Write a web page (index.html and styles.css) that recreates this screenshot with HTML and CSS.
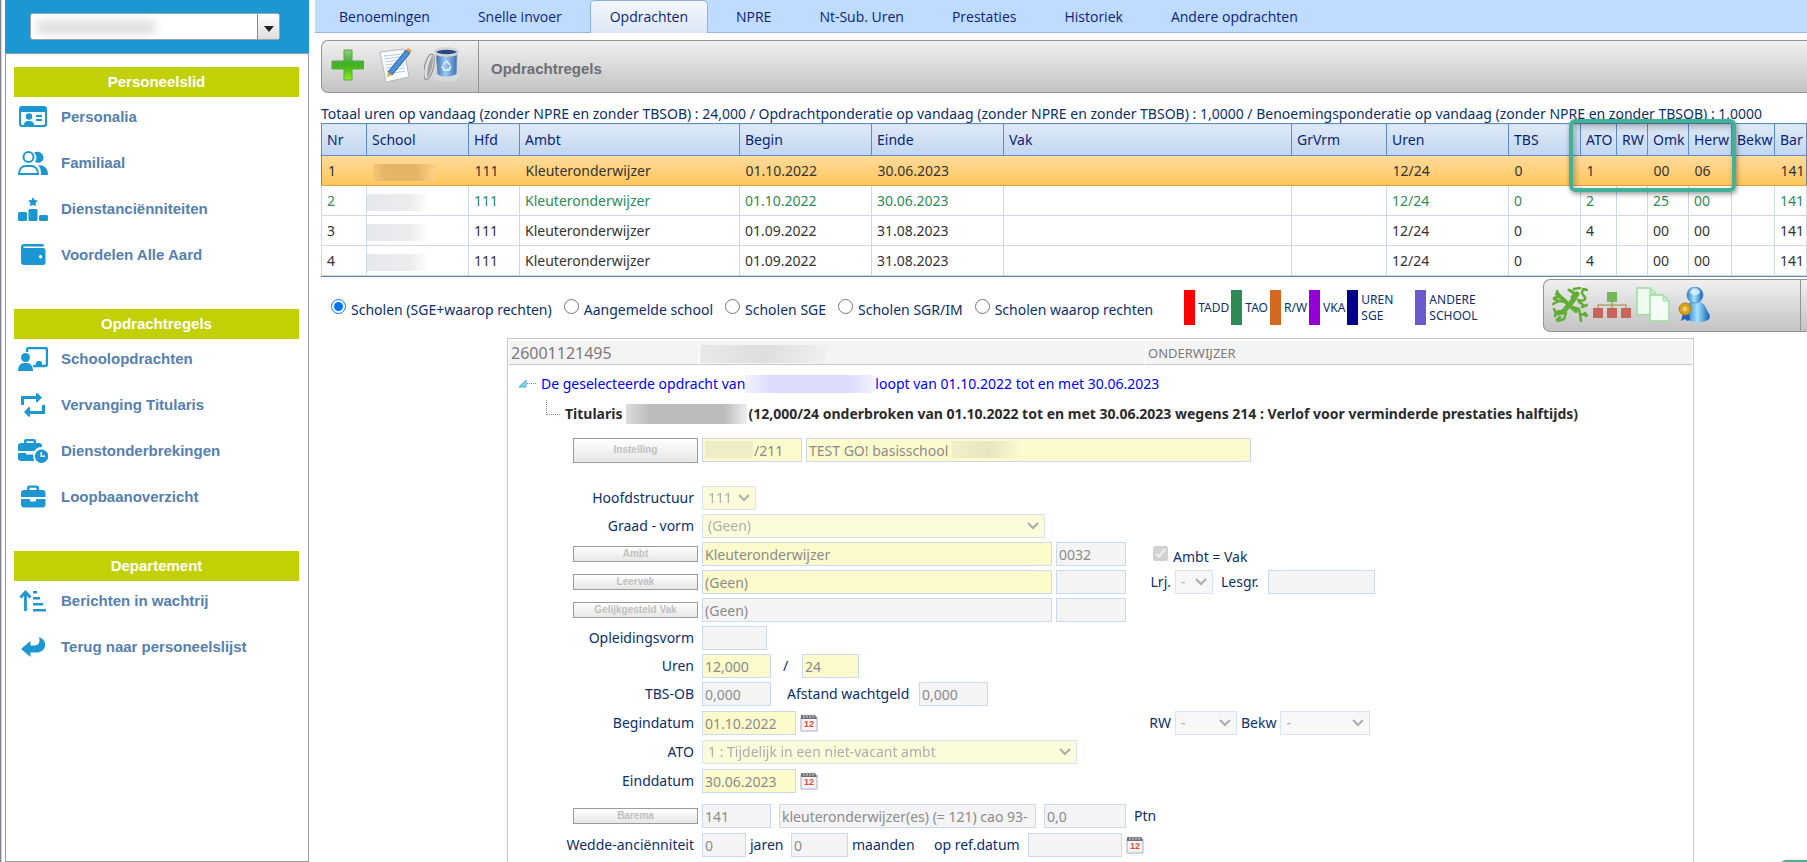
FILE: index.html
```html
<!DOCTYPE html>
<html lang="nl">
<head>
    <meta charset="utf-8">
    <meta name="viewport" content="width=device-width, initial-scale=1">
    <title>Opdrachten</title>
    <link rel="stylesheet" href="styles.css">
</head>
<body>
<div class="layout">

    <aside class="sidebar">
        <div class="search">
            <div class="combo">
                <input type="text" aria-label="Personeelslid">
                <span class="blur blur-search"></span>
                <button type="button" aria-label="Open lijst"><svg width="10" height="6" viewBox="0 0 10 6"><path d="M0 0h10L5 6z" fill="#222"/></svg></button>
            </div>
        </div>
        <nav class="menu">
            <h2>Personeelslid</h2>
            <ul>
                <li><a href="#"><svg viewBox="0 0 30 24"><path fill-rule="evenodd" d="M4 1h22a3 3 0 0 1 3 3v15a3 3 0 0 1-3 3H4a3 3 0 0 1-3-3V4a3 3 0 0 1 3-3zM3 7v12l1 1h2c0-3 2-4 5-4s5 1 5 4h10l1-1V7z"/><circle cx="11" cy="11.500" r="3.200"/><path d="M18 10h6v2h-6zM18 14h6v2h-6z"/></svg>Personalia</a></li>
                <li><a href="#"><svg viewBox="0 0 30 24"><circle cx="10.500" cy="6" r="5" fill="none" stroke="#1c97d2" stroke-width="2"/><path d="M1 23c0-5 3-8 7-8h5c4 0 7 3 7 8z" fill="none" stroke="#1c97d2" stroke-width="2"/><path d="M16 1.500c5-2 9.500 1 9.500 5 0 4.500-5 6.500-8.500 4.500 2-3 2-6.500-1-9.500zM20 14c6 0 10 3 10 10h-7c0-5-.5-7-3-10z"/></svg>Familiaal</a></li>
                <li><a href="#"><svg viewBox="0 0 30 24"><rect x="0" y="15" width="9" height="9" rx="1.500"/><rect x="10.500" y="12" width="9" height="12" rx="1.500"/><rect x="21" y="18" width="9" height="6" rx="1.500"/><path d="M15 0l1.500 3 3.500.5-2.500 2.500.6 3.300L15 7.700l-3.100 1.600.6-3.300L10 3.500l3.500-.5z"/></svg>Dienstanciënniteiten</a></li>
                <li><a href="#"><svg viewBox="0 0 30 24"><path fill-rule="evenodd" d="M6 1h18a1.500 1.500 0 0 1 1.500 2.500H5.500V5H25a2.500 2.500 0 0 1 2.500 2.500v12A2.500 2.500 0 0 1 25 22H6a3 3 0 0 1-3-3V4a3 3 0 0 1 3-3zm16.500 11a1.700 1.700 0 1 0 .1 0z"/></svg>Voordelen Alle Aard</a></li>
            </ul>
            <h2>Opdrachtregels</h2>
            <ul>
                <li><a href="#"><svg viewBox="0 0 30 24"><circle cx="7.500" cy="10.500" r="4.500"/><path d="M0 24c0-5 2.500-8 6-8h3c3.500 0 6 3 6 8z"/><path d="M9 5V3a2 2 0 0 1 2-2h16a2 2 0 0 1 2 2v14a2 2 0 0 1-2 2H15" fill="none" stroke="#1c97d2" stroke-width="2.400"/><path d="M18 18v-2a2 2 0 0 1 2-2h2a2 2 0 0 1 2 2v2z"/></svg>Schoolopdrachten</a></li>
                <li><a href="#"><svg viewBox="0 0 30 24"><path d="M4.500 12V4.500H20M25.500 12v7.500H10" fill="none" stroke="#1c97d2" stroke-width="3"/><path d="M18 0l1-.2 5 4.700-5 5-1-.5zM12 14l-1-.2-5 5.200 5 5 1-.5z"/></svg>Vervanging Titularis</a></li>
                <li><a href="#"><svg viewBox="0 0 30 24"><path fill-rule="evenodd" d="M6 4V2a2 2 0 0 1 2-2h8a2 2 0 0 1 2 2v2h3a3 3 0 0 1 3 3v1c-4 0-6 1.500-7.500 4H0V7a3 3 0 0 1 3-3zm2.500 0h7V2.200h-7zM0 14h8v1.500h7.500c-.5 2.500 0 4.500 1 6.500H3a3 3 0 0 1-3-3z"/><path fill-rule="evenodd" d="M23.500 10.500a6.700 6.700 0 1 0 .1 0zM22.500 13v5h4.500v-1.500h-3V13z"/></svg>Dienstonderbrekingen</a></li>
                <li><a href="#"><svg viewBox="0 0 30 24"><path fill-rule="evenodd" d="M9 5V3a2.500 2.500 0 0 1 2.500-2.500h7A2.500 2.500 0 0 1 21 3v2h3.500a3 3 0 0 1 3 3v4H3V8a3 3 0 0 1 3-3zm2.500 0h7V2.800h-7zM3 14h9v1.500q0 1 1 1h4q1 0 1-1V14h9.500v5.500a3 3 0 0 1-3 3H6a3 3 0 0 1-3-3z"/></svg>Loopbaanoverzicht</a></li>
            </ul>
            <h2>Departement</h2>
            <ul>
                <li><a href="#"><svg viewBox="0 0 30 24"><path d="M7.500 22V3M2.500 8.500l5-5.500 5 5.500" fill="none" stroke="#1c97d2" stroke-width="2.800"/><path d="M15 2h4v2.500h-4zM15 8h7v2.500h-7zM15 14h10v2.500H15zM15 20h13v2.500H15z"/></svg>Berichten in wachtrij</a></li>
                <li><a href="#"><svg viewBox="0 0 30 24"><path d="M3 14l9.500-8v4.500h4c4 0 6-3 4.500-8.500 5 2 6.500 5 6 9-.6 4-4 6.500-9 6.500h-5.500V22z"/></svg>Terug naar personeelslijst</a></li>
            </ul>
        </nav>
    </aside>

    <main class="content">
        <nav class="tabs">
            <a href="#">Benoemingen</a>
            <a href="#">Snelle invoer</a>
            <a href="#" class="active">Opdrachten</a>
            <a href="#">NPRE</a>
            <a href="#">Nt-Sub. Uren</a>
            <a href="#">Prestaties</a>
            <a href="#">Historiek</a>
            <a href="#">Andere opdrachten</a>
        </nav>

        <div class="toolbar">
            <div class="tools">
                <button type="button" aria-label="Toevoegen"><svg width="36" height="36" viewBox="0 0 36 36"><defs><linearGradient id="plus" x1="0" y1="0" x2="0" y2="1"><stop offset="0" stop-color="#8ed07c"/><stop offset=".45" stop-color="#3fae2a"/><stop offset=".6" stop-color="#4cbb16"/><stop offset="1" stop-color="#86f01c"/></linearGradient></defs><path d="M14 3h8v11h11.500v8H22v11h-8V22H2v-8h12z" fill="url(#plus)" stroke="#5aa54a"/></svg></button>
                <button type="button" aria-label="Wijzigen"><svg width="36" height="36" viewBox="0 0 36 36"><path d="M3 5l24-3 5 28-23 5z" fill="#fafbfd" stroke="#b4b8c0"/><path d="M7 9l18-2M7.500 12l18-2.500M8 15l18-2.500M8.500 18l18-2.500M9 21l18-3M9.500 24l18-3M10 27l18-3" stroke="#b9c9e2"/><path d="M29 3l4 3-18 22-4-3z" fill="#4b8fd8" stroke="#2860a8"/><path d="M11 25l4 3-5.500 2.500z" fill="#e5b84a"/><path d="M29 3l2-2 4 3-2 2z" fill="#e09a40"/></svg></button>
                <button type="button" aria-label="Verwijderen"><svg width="36" height="36" viewBox="0 0 36 36"><defs><linearGradient id="bin"><stop offset="0" stop-color="#3b70b2"/><stop offset=".45" stop-color="#9cc8f4"/><stop offset="1" stop-color="#3b70b2"/></linearGradient></defs><path d="M12 5h21l-1 23c-4 3-14 3-18 0z" fill="url(#bin)" stroke="#6d8fb8"/><ellipse cx="22.500" cy="5" rx="11.500" ry="3.500" fill="#264a80" stroke="#d4d4d8" stroke-width="2.500"/><path d="M11 29c5 4 18 4 23 0" fill="none" stroke="#d7d9dc" stroke-width="5" stroke-linecap="round"/><path d="M19 18l3.500-4 3.500 4M27 19l-2 4h-5l-2-4" fill="none" stroke="#d8efff" stroke-width="1.800"/><ellipse cx="6" cy="20" rx="3" ry="12" transform="rotate(13 6 20)" fill="#a4a4a8" stroke="#dedede" stroke-width="2"/><ellipse cx="5" cy="20" rx="4.500" ry="13" transform="rotate(13 6 20)" fill="none" stroke="#88888c"/></svg></button>
            </div>
            <span class="toolbar-title">Opdrachtregels</span>
        </div>

        <p class="totals">Totaal uren op vandaag (zonder NPRE en zonder TBSOB) : 24,000 / Opdrachtponderatie op vandaag (zonder NPRE en zonder TBSOB) : 1,0000 / Benoemingsponderatie op vandaag (zonder NPRE en zonder TBSOB) : 1,0000</p>

        <div class="grid-wrap">
            <table class="grid">
                <colgroup>
                    <col class="c-nr"><col class="c-school"><col class="c-hfd"><col class="c-ambt"><col class="c-date"><col class="c-date"><col><col class="c-grvrm"><col class="c-uren"><col class="c-tbs"><col class="c-ato"><col class="c-rw"><col class="c-omk"><col class="c-herw"><col class="c-herw"><col class="c-bar">
                </colgroup>
                <thead>
                    <tr><th>Nr</th><th>School</th><th>Hfd</th><th>Ambt</th><th>Begin</th><th>Einde</th><th>Vak</th><th>GrVrm</th><th>Uren</th><th>TBS</th><th>ATO</th><th>RW</th><th>Omk</th><th>Herw</th><th>Bekw</th><th>Bar</th></tr>
                </thead>
                <tbody>
                    <tr class="selected"><td>1</td><td class="masked"><span class="blur blur-orange"></span></td><td>111</td><td>Kleuteronderwijzer</td><td>01.10.2022</td><td>30.06.2023</td><td></td><td></td><td>12/24</td><td>0</td><td>1</td><td></td><td>00</td><td>06</td><td></td><td>141</td></tr>
                    <tr class="tao"><td>2</td><td class="masked"><span class="blur blur-cell"></span></td><td>111</td><td>Kleuteronderwijzer</td><td>01.10.2022</td><td>30.06.2023</td><td></td><td></td><td>12/24</td><td>0</td><td>2</td><td></td><td>25</td><td>00</td><td></td><td>141</td></tr>
                    <tr><td>3</td><td class="masked"><span class="blur blur-cell"></span></td><td>111</td><td>Kleuteronderwijzer</td><td>01.09.2022</td><td>31.08.2023</td><td></td><td></td><td>12/24</td><td>0</td><td>4</td><td></td><td>00</td><td>00</td><td></td><td>141</td></tr>
                    <tr><td>4</td><td class="masked"><span class="blur blur-cell"></span></td><td>111</td><td>Kleuteronderwijzer</td><td>01.09.2022</td><td>31.08.2023</td><td></td><td></td><td>12/24</td><td>0</td><td>4</td><td></td><td>00</td><td>00</td><td></td><td>141</td></tr>
                </tbody>
            </table>
            <div class="marker"></div>
        </div>

        <div class="filters">
            <div class="scope">
                <label><input type="radio" name="scope" checked>Scholen (SGE+waarop rechten)</label>
                <label><input type="radio" name="scope">Aangemelde school</label>
                <label><input type="radio" name="scope">Scholen SGE</label>
                <label><input type="radio" name="scope">Scholen SGR/IM</label>
                <label><input type="radio" name="scope">Scholen waarop rechten</label>
            </div>
            <ul class="legend">
                <li><i class="tadd"></i>TADD</li>
                <li><i class="green"></i>TAO</li>
                <li><i class="rw"></i>R/W</li>
                <li><i class="vka"></i>VKA</li>
                <li class="wide"><i class="sge"></i>UREN<br>SGE</li>
                <li><i class="andere"></i>ANDERE<br>SCHOOL</li>
            </ul>
            <div class="toolbar toolbar-right">
                <div class="tools">
                    <button type="button" aria-label="Vlaanderen"><svg width="36" height="36" viewBox="0 0 36 36"><g fill="none" stroke="#62ad35" stroke-linecap="round" stroke-linejoin="round"><path d="M5 7l7 6 7 7 5 4" stroke-width="4"/><path d="M25 7l-6 9-8 9-6 1" stroke-width="5"/><path d="M2 11l4-1M5 4l2 4M1 17l6-3 6 1M7 14l-5-2M2 22l2 4-1 3M6 34l6-2 2-6M8 30l-3 3M20 20l7 2 1 5 7 1M28 27l1 7M33 26l1 3" stroke-width="2.500"/><path d="M22 2l6-1M20 5l4 4M26 13c6 2 9-1 6-4s-3-5 1-7M31 2l4 1M27 15l6 4M30 20l5-2" stroke-width="2.500"/><path d="M17 3l7 4-4 3" stroke-width="3"/></g></svg></button>
                    <button type="button" aria-label="Structuur"><svg width="40" height="36" viewBox="0 0 40 36"><path d="M20 14v8M6 22v-4h28v4" fill="none" stroke="#b3a26c" stroke-width="1.500"/><rect x="15" y="5" width="10" height="10" fill="#72b85a"/><path d="M1 21h10v10H1zM15 21h10v10H15zM29 21h10v10H29z" fill="#c8645c"/></svg></button>
                    <button type="button" aria-label="Kopiëren"><svg width="36" height="36" viewBox="0 0 36 36"><path d="M1 1h13l6 6v20l-19 1z" fill="#effaef" stroke="#9bdc9e" stroke-width="1.500"/><path d="M14 8h13l6 6v20H14z" fill="#f5fcf5" stroke="#9bdc9e" stroke-width="1.500"/><path d="M14 1v6h6zM27 8v6h6z" fill="#c8f0c8" stroke="#9bdc9e"/></svg></button>
                    <button type="button" aria-label="Persoon"><svg width="36" height="36" viewBox="0 0 36 36"><defs><linearGradient id="pers"><stop offset="0" stop-color="#2e80c8"/><stop offset=".45" stop-color="#a5e4ff"/><stop offset="1" stop-color="#145cb0"/></linearGradient></defs><path d="M11 32V22c0-6 3-8 9-8s9 4 11 9c2 4 4 6 2 9-3 4-18 4-22 0z" fill="url(#pers)"/><circle cx="19" cy="8" r="8" fill="url(#pers)" stroke="#4a86bb" stroke-width=".8"/><ellipse cx="19" cy="5" rx="5" ry="3" fill="#e3f2ff" opacity=".8"/><path d="M7 26l-2 8 4-2 2 2 3-1-1-8z" fill="#2163b5"/><circle cx="9" cy="22" r="6" fill="#d6a21e" stroke="#b57f16"/><circle cx="9" cy="22" r="2.500" fill="#f0cb5e"/></svg></button>
                </div>
            </div>
        </div>

        <section class="panel">
            <header class="panel-head">
                <span class="ph-id">26001121495</span>
                <span class="ph-name"><span class="blur blur-name"></span></span>
                <span class="ph-role">ONDERWIJZER</span>
            </header>

            <div class="tree">
                <div class="tree-root"><svg width="18" height="10" viewBox="0 0 18 10"><path d="M1 8L8 1v7z" fill="#6fd6f5" stroke="#4db4dc"/><path d="M9 4.500h9" stroke="#888" stroke-dasharray="1 1"/></svg>De geselecteerde opdracht van<span class="blur blur-blue"></span>loopt van 01.10.2022 tot en met 30.06.2023</div>
                <div class="tree-node"><i></i>Titularis<span class="blur blur-bold"></span>(12,000/24 onderbroken van 01.10.2022 tot en met 30.06.2023 wegens 214 : Verlof voor verminderde prestaties halftijds)</div>
            </div>

            <form class="form">
                <div class="row">
                    <div class="lbl"><button type="button" class="btn btn-tall" disabled>Instelling</button></div>
                    <div class="fields">
                        <span class="field-masked"><input class="req w-code" type="text" value="/211" aria-label="Instelling code" disabled><span class="blur blur-code"></span></span>
                        <span class="field-masked"><input class="req w-school" type="text" value="TEST GO! basisschool" aria-label="Instelling" disabled><span class="blur blur-school"></span></span>
                    </div>
                </div>
                <div class="row row-structure">
                    <label class="lbl" for="hoofd">Hoofdstructuur</label>
                    <div class="fields"><select id="hoofd" class="req w-hoofd" disabled><option>111</option></select></div>
                </div>
                <div class="row">
                    <label class="lbl" for="graad">Graad - vorm</label>
                    <div class="fields"><select id="graad" class="req w-graad" disabled><option>(Geen)</option></select></div>
                </div>
                <div class="row">
                    <div class="lbl"><button type="button" class="btn" disabled>Ambt</button></div>
                    <div class="fields">
                        <input class="req w-ambt" type="text" value="Kleuteronderwijzer" aria-label="Ambt" disabled>
                        <input class="w-nr" type="text" value="0032" aria-label="Ambt code" disabled>
                    </div>
                    <label class="check"><input type="checkbox" checked disabled>Ambt = Vak</label>
                </div>
                <div class="row">
                    <div class="lbl"><button type="button" class="btn" disabled>Leervak</button></div>
                    <div class="fields">
                        <input class="req w-ambt" type="text" value="(Geen)" aria-label="Leervak" disabled>
                        <input class="w-nr" type="text" aria-label="Leervak code" disabled>
                    </div>
                    <div class="extra">
                        <label class="first" for="lrj">Lrj.</label>
                        <select id="lrj" class="w-lrj" disabled><option>-</option></select>
                        <label class="lesgr" for="lesgr">Lesgr.</label>
                        <input id="lesgr" class="w-lesgr" type="text" disabled>
                    </div>
                </div>
                <div class="row">
                    <div class="lbl"><button type="button" class="btn" disabled>Gelijkgesteld Vak</button></div>
                    <div class="fields">
                        <input class="w-ambt" type="text" value="(Geen)" aria-label="Gelijkgesteld vak" disabled>
                        <input class="w-nr" type="text" aria-label="Gelijkgesteld vak code" disabled>
                    </div>
                </div>
                <div class="row">
                    <label class="lbl" for="opl">Opleidingsvorm</label>
                    <div class="fields"><input id="opl" class="w-opl" type="text" disabled></div>
                </div>
                <div class="row">
                    <label class="lbl" for="uren">Uren</label>
                    <div class="fields">
                        <input id="uren" class="req w-num" type="text" value="12,000" disabled>
                        <span class="slash">/</span>
                        <input class="req w-small" type="text" value="24" aria-label="Noemer" disabled>
                    </div>
                </div>
                <div class="row">
                    <label class="lbl" for="tbs">TBS-OB</label>
                    <div class="fields">
                        <input id="tbs" class="w-num" type="text" value="0,000" disabled>
                        <label class="afstand" for="afstand">Afstand wachtgeld</label>
                        <input id="afstand" class="w-num" type="text" value="0,000" disabled>
                    </div>
                </div>
                <div class="row row-date">
                    <label class="lbl" for="begin">Begindatum</label>
                    <div class="fields">
                        <input id="begin" class="req w-date" type="text" value="01.10.2022" disabled>
                        <button type="button" class="cal" aria-label="Kalender"><svg width="18" height="18" viewBox="0 0 18 18"><path d="M1 3h16v14H1z" fill="#f5f5ff" stroke="#a8a8cc"/><path d="M1 1h14l2 4H1z" fill="#707078"/><path d="M4 0v4M7 0v4M10 0v4M13 0v4" stroke="#d8d8d8"/><text x="9" y="13" text-anchor="middle">12</text></svg></button>
                    </div>
                    <div class="extra">
                        <label class="first" for="rw">RW</label>
                        <select id="rw" class="w-rw" disabled><option>-</option></select>
                        <label for="bekw">Bekw</label>
                        <select id="bekw" class="w-bekw" disabled><option>-</option></select>
                    </div>
                </div>
                <div class="row">
                    <label class="lbl" for="ato">ATO</label>
                    <div class="fields"><select id="ato" class="req w-ato" disabled><option>1 : Tijdelijk in een niet-vacant ambt</option></select></div>
                </div>
                <div class="row row-date">
                    <label class="lbl" for="eind">Einddatum</label>
                    <div class="fields">
                        <input id="eind" class="req w-date" type="text" value="30.06.2023" disabled>
                        <button type="button" class="cal" aria-label="Kalender"><svg width="18" height="18" viewBox="0 0 18 18"><path d="M1 3h16v14H1z" fill="#f5f5ff" stroke="#a8a8cc"/><path d="M1 1h14l2 4H1z" fill="#707078"/><path d="M4 0v4M7 0v4M10 0v4M13 0v4" stroke="#d8d8d8"/><text x="9" y="13" text-anchor="middle">12</text></svg></button>
                    </div>
                </div>
                <div class="row row-barema">
                    <div class="lbl"><button type="button" class="btn" disabled>Barema</button></div>
                    <div class="fields fields-wide">
                        <input class="w-num" type="text" value="141" aria-label="Barema" disabled>
                        <input class="w-barema" type="text" value="kleuteronderwijzer(es) (= 121) cao 93-" aria-label="Barema omschrijving" disabled>
                        <input id="ptn" class="w-ptn" type="text" value="0,0" disabled>
                        <label for="ptn">Ptn</label>
                    </div>
                </div>
                <div class="row">
                    <label class="lbl" for="jaren">Wedde-anciënniteit</label>
                    <div class="fields">
                        <input id="jaren" class="w-jaren" type="text" value="0" disabled>
                        <label class="jaren" for="jaren">jaren</label>
                        <input id="maanden" class="w-small" type="text" value="0" disabled>
                        <label class="maanden" for="maanden">maanden</label>
                        <label class="ref" for="ref">op ref.datum</label>
                        <input id="ref" class="w-date" type="text" disabled>
                        <button type="button" class="cal" aria-label="Kalender"><svg width="18" height="18" viewBox="0 0 18 18"><path d="M1 3h16v14H1z" fill="#f5f5ff" stroke="#a8a8cc"/><path d="M1 1h14l2 4H1z" fill="#707078"/><path d="M4 0v4M7 0v4M10 0v4M13 0v4" stroke="#d8d8d8"/><text x="9" y="13" text-anchor="middle">12</text></svg></button>
                    </div>
                </div>
            </form>
        </section>
    </main>
    <div class="marker marker-corner"></div>
</div>
</body>
</html>
```

FILE: styles.css
```css
* {
    box-sizing: border-box;
}
body {
    margin: 0;
    background: #fff;
    color: #0b2f6b;
    font: 14px/20px "Noto Sans", "Open Sans", sans-serif;
}
ul, h2, p {
    margin: 0;
    padding: 0;
}
ul {
    list-style: none;
}
a {
    color: inherit;
    text-decoration: none;
}
button, input, select {
    font: inherit;
}
.layout {
    position: relative;
    display: flex;
    min-height: 100vh;
    overflow: hidden;
    border-left: 1px solid #83838f;
    box-shadow: inset 1px 0 #c6d3ea;
}

/* left menu */
.sidebar {
    display: flex;
    flex-direction: column;
    flex: none;
    width: 304px;
    margin-left: 4px;
    font-family: "Liberation Sans", Arial, sans-serif;
}
.search {
    padding: 13px 29px 13px 25px;
    background: #1c97d2;
}
.combo {
    position: relative;
    display: flex;
    height: 27px;
    border: 1px solid #9aa4ab;
    border-radius: 3px;
    background: #fff;
    overflow: hidden;
}
.combo input {
    flex: 1;
    min-width: 0;
    border: 0;
    padding: 0 6px;
    background: transparent;
}
.combo button {
    width: 22px;
    border: 0;
    border-left: 1px solid #888;
    padding: 0;
    background: linear-gradient(#fff, #dedede);
    line-height: 10px;
}
.menu {
    flex: 1;
    padding: 13px 9px 0 8px;
    border: 1px solid #999;
}
.menu h2 {
    background: #c2d006;
    color: #fff;
    font-size: 15px;
    line-height: 30px;
    text-align: center;
}
.menu ul {
    margin-bottom: 34px;
}
.menu li + li {
    margin-top: 6px;
}
.menu a {
    display: flex;
    align-items: center;
    gap: 13px;
    height: 40px;
    padding-left: 4px;
    color: #5580b0;
    font-size: 15px;
    font-weight: bold;
}
.menu svg {
    width: 30px;
    height: 24px;
    fill: #1c97d2;
}

.content {
    display: flex;
    flex-direction: column;
    flex: 1;
    min-width: 0;
    margin-left: 6px;
}
.tabs {
    display: flex;
    height: 33px;
    border-bottom: 1px solid #94b6e8;
    background: #bfdbff;
    color: #0b1f78;
    font-family: "Open Sans", "Noto Sans", sans-serif;
}
.tabs a {
    height: 33px;
    margin: 0 4px;
    padding: 0 20px;
    line-height: 33px;
    white-space: nowrap;
}
.tabs .active {
    border: 1px solid #8fb2e6;
    border-bottom: 0;
    border-radius: 5px 5px 0 0;
    padding: 0 19px;
    background: linear-gradient(#f4f7fd, #dce7f6);
    line-height: 31px;
}
.toolbar {
    display: flex;
    align-items: center;
    height: 53px;
    margin: 7px 0 0 6px;
    border: 1px solid #949494;
    border-right: 0;
    border-radius: 7px 0 0 7px;
    background: linear-gradient(#f0f0f0, #c3c3c3);
}
.tools {
    display: flex;
    gap: 11px;
    height: 100%;
    padding: 6px 18px 0 8px;
    border-right: 1px solid #949494;
}
.tools button, .cal {
    display: block;
    border: 0;
    padding: 0;
    background: none;
    line-height: 0;
}
.tools button {
    height: 36px;
}
.toolbar-title {
    padding: 4px 0 0 12px;
    color: #6b6e73;
    font: bold 15px/20px "Liberation Sans", Arial, sans-serif;
}
.totals {
    padding: 12px 0 0 6px;
    line-height: 18px;
    white-space: nowrap;
}

/* assignment lines */
.grid-wrap {
    position: relative;
    margin-left: 6px;
    border-bottom: 1px solid #6585b0;
}
.grid {
    width: 100%;
    table-layout: fixed;
    border-collapse: collapse;
    border: 1px solid #6585b0;
    color: #333;
}
.grid th, .grid td {
    padding: 0 0 0 5px;
    text-align: left;
    font-weight: normal;
    white-space: nowrap;
}
.grid th {
    height: 32px;
    border: 1px solid #5e8cc8;
    background: linear-gradient(#dfe9f5, #c1d7f1);
    color: #0b1f78;
}
.grid td {
    height: 30px;
    padding-top: 1px;
    border: 1px solid #d0d7e5;
}
.grid .selected td {
    border-width: 0 0 1px;
    border-color: #f0a040;
    padding-left: 6px;
}
.grid .selected {
    background: linear-gradient(#ffdb9b, #ffc65a);
}
.grid .tao {
    color: #2e8b57;
}
.grid .masked {
    padding-left: 0;
}
.c-nr { width: 45px; }
.c-school { width: 102px; }
.c-hfd { width: 51px; }
.c-ambt { width: 220px; }
.c-date { width: 132px; }
.c-grvrm { width: 95px; }
.c-uren { width: 122px; }
.c-tbs { width: 72px; }
.c-ato { width: 36px; }
.c-rw { width: 31px; }
.c-omk { width: 41px; }
.c-herw { width: 43px; }
.c-bar { width: 32px; }
.marker {
    position: absolute;
    top: -4px;
    right: 71px;
    width: 167px;
    height: 73px;
    border: 4px solid #43b098;
    border-radius: 6px;
    box-shadow: 1px 2px 5px rgba(0,0,0,0.4), inset 2px 3px 7px rgba(0,0,0,0.3);
}
/* only its top edge shows above the fold */
.marker-corner {
    top: auto;
    right: -140px;
    bottom: -71px;
}

/* hidden names */
.blur {
    display: inline-block;
    vertical-align: middle;
}
.blur-search {
    position: absolute;
    left: 6px;
    top: 7px;
    width: 118px;
    height: 13px;
    background: #ddd;
    filter: blur(5px);
}
.blur-orange, .blur-cell {
    width: 62px;
    height: 17px;
    background: linear-gradient(90deg, #e6e8ee, #ececec 70%, #fff);
}
.blur-orange {
    background: linear-gradient(90deg, #f4c878, #e3b566 20%, #e3b566 70%, #ffd084);
}
.blur-name {
    width: 127px;
    height: 18px;
    background: linear-gradient(90deg, #e9e9e9, #dedede 50%, #f0f0f0);
}
.blur-blue {
    width: 130px;
    height: 18px;
    background: linear-gradient(90deg, #f2f2ff, #dcdcff 20%, #dcdcff 80%, #f2f2ff);
}
.blur-bold {
    width: 121px;
    height: 20px;
    margin: 0 1px 0 4px;
    background: linear-gradient(90deg, #ddd, #bbb 20%, #bbb 80%, #eee);
}
.blur-code, .blur-school {
    position: absolute;
    left: 3px;
    top: 3px;
    width: 48px;
    height: 17px;
    background: #efedc6;
}
.blur-school {
    left: 146px;
    width: 72px;
    background: linear-gradient(90deg, #f2f0c8, #e8e6c0 50%, #fdfbcf);
}

.filters {
    display: flex;
    align-items: center;
    height: 61px;
    white-space: nowrap;
}
.scope {
    display: flex;
    padding-left: 4px;
}
.scope label {
    display: flex;
    align-items: center;
    padding-top: 4px;
}
.scope input {
    width: 15px;
    height: 15px;
    margin: 0 5px 6px 12px;
}
.legend {
    display: flex;
    gap: 2px;
    margin-left: 31px;
    font-size: 12px;
    line-height: 16px;
}
.legend li {
    display: flex;
    align-items: center;
    gap: 3px;
}
.legend .wide {
    width: 66px;
}
.legend i {
    flex: none;
    width: 11px;
    height: 35px;
}
.tadd { background: #f00; }
.green { background: #2e8b57; }
.rw { background: #d2691e; }
.vka { background: #9400d3; }
.sge { background: #00008b; }
.andere { background: #6a5acd; }
.toolbar-right {
    width: 264px;
    margin: 0 0 4px auto;
}
.toolbar-right .tools {
    gap: 4px;
    width: 257px;
    padding-top: 7px;
}

/* detail */
.panel {
    flex: 1;
    margin: 0 113px 0 192px;
    border: 1px solid #c8c8c8;
    border-bottom: 0;
    padding: 2px 1px 0;
}
.panel-head {
    display: grid;
    grid-template-columns: 190px 445px 1fr;
    gap: 1px;
    color: #7b7b7b;
}
.panel-head > span {
    height: 24px;
    padding-left: 2px;
    border-bottom: 1px solid #c8c8c8;
    background: #f4f4f4;
    line-height: 24px;
}
.panel-head .ph-id {
    font-size: 16px;
}
.panel-head .ph-name {
    padding-left: 0;
}
.panel-head .ph-role {
    font-size: 13px;
}
.tree {
    padding: 4px 0 9px 9px;
    line-height: 30px;
    white-space: nowrap;
}
.tree-root {
    display: flex;
    align-items: center;
    color: #00f;
}
.tree-root svg {
    margin-right: 5px;
}
.tree-node {
    display: flex;
    align-items: center;
    padding-left: 28px;
    color: #2b2b2b;
    font-weight: bold;
}
.tree-node i {
    width: 14px;
    height: 15px;
    margin: 0 5px 14px 0;
    border-left: 1px dotted #888;
    border-bottom: 1px dotted #888;
}
.form {
    padding-left: 64px;
}
.row {
    display: flex;
    align-items: center;
    height: 24px;
    margin-bottom: 4px;
    white-space: nowrap;
}
.row-structure {
    margin-top: 24px;
}
.row-date {
    height: 26px;
}
.row-barema {
    margin: 10px 0 5px;
}
.lbl {
    flex: none;
    width: 125px;
    margin-right: 4px;
    text-align: right;
}
label.lbl {
    display: flex;
    justify-content: flex-end;
    padding-right: 4px;
}
.btn {
    display: block;
    width: 100%;
    height: 16px;
    padding: 0;
    border: 1px solid #9c9c9c;
    background: linear-gradient(#fff, #e6e6e6);
    color: #c0c0c0;
    font: bold 10px/14px "Liberation Sans", Arial, sans-serif;
}
.btn-tall {
    height: 25px;
}
.fields {
    display: flex;
    align-items: center;
    gap: 4px;
    flex: none;
    min-width: 446px;
}
.fields-wide {
    gap: 8px;
}
.form input[type=text], .form select {
    height: 24px;
    border: 1px solid #c9d9ef;
    border-radius: 0;
    padding: 0 2px;
    background-color: #f4f4f4;
    color: #8b8b8b;
}
.form select {
    appearance: none;
    padding: 0 5px;
    background-image: url("data:image/svg+xml,%3Csvg xmlns='http://www.w3.org/2000/svg' width='12' height='8'%3E%3Cpath d='M1 1l5 5 5-5' fill='none' stroke='%23888' stroke-width='2'/%3E%3C/svg%3E");
    background-position: right 5px center;
    background-repeat: no-repeat;
    opacity: 0.7;
}
.form .req[class] {
    background-color: #fdfbcb;
}
.w-code { width: 100px; }
.w-school { width: 445px; }
.w-hoofd { width: 54px; }
.w-graad { width: 343px; }
.w-ambt { width: 350px; }
.w-nr { width: 70px; }
.w-lrj { width: 38px; }
.w-lesgr { width: 107px; }
.w-opl { width: 65px; }
.w-num { width: 69px; }
.w-small { width: 57px; }
.w-date { width: 94px; }
.w-rw { width: 62px; }
.w-bekw { width: 90px; }
.w-ato { width: 375px; }
.w-barema { width: 257px; }
.w-ptn { width: 82px; }
.w-jaren { width: 44px; }
.form .w-code[type=text] {
    padding-left: 51px;
}
.field-masked {
    position: relative;
    display: flex;
}
.slash {
    width: 23px;
    padding-left: 8px;
}
.afstand {
    width: 140px;
    padding-left: 12px;
}
.jaren {
    width: 37px;
}
.maanden {
    width: 78px;
}
.ref {
    width: 90px;
}
.check {
    display: flex;
    align-items: center;
    gap: 5px;
    padding: 5px 0 0 5px;
}
.check input {
    width: 15px;
    height: 15px;
    margin: 0 0 6px;
}
.extra {
    display: flex;
    align-items: center;
    gap: 4px;
}
.extra .first {
    display: flex;
    justify-content: flex-end;
    width: 23px;
}
.extra .lesgr {
    width: 47px;
    padding-left: 4px;
}
.cal {
    height: 24px;
}
.cal text {
    fill: #e8501e;
    font: bold 9px "Liberation Sans", Arial, sans-serif;
}
```
